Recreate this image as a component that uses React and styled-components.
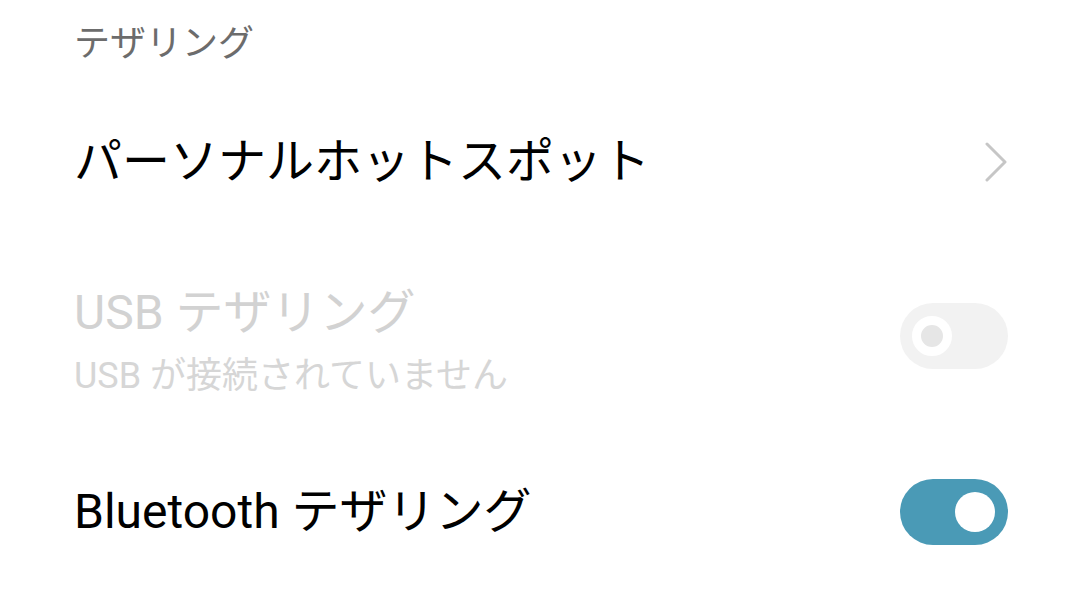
import React from "react";
import styled, { createGlobalStyle } from "styled-components";

const Global = createGlobalStyle`
  html, body { margin: 0; padding: 0; background: #ffffff; }
  body { font-family: Roboto, "Noto Sans CJK JP", sans-serif; }
`;

const Page = styled.div`
  width: 1080px;
  height: 591px;
  overflow: hidden;
  background: #ffffff;
  display: flex;
  flex-direction: column;
  padding: 0 72px 0 74px;
  box-sizing: border-box;
`;

const SectionTitle = styled.div`
  font-size: 36px;
  line-height: 50px;
  color: #6c6c6c;
  padding-top: 19px;
  height: 72px;
  box-sizing: border-box;
  flex: none;
`;

const Row = styled.div`
  display: flex;
  align-items: center;
  justify-content: space-between;
  height: ${(p) => p.$h}px;
  flex: none;
`;

const TextBlock = styled.div`
  display: flex;
  flex-direction: column;
  gap: ${(p) => (p.$sub ? 12 : 0)}px;
  margin-top: ${(p) => p.$offset || 0}px;
`;

const Title = styled.div`
  font-size: 48px;
  line-height: 56px;
  color: ${(p) => (p.$disabled ? "#d2d2d2" : "#000000")};
  white-space: nowrap;
`;

const Subtitle = styled.div`
  font-size: 36px;
  line-height: 46px;
  color: #d6d6d6;
  white-space: nowrap;
`;

const Chevron = styled.svg`
  width: 24px;
  height: 40px;
  flex: none;
`;

const Track = styled.div`
  width: 108px;
  height: 66px;
  border-radius: 33px;
  background: ${(p) => (p.$on ? "#4a9ab6" : "#f2f2f2")};
  display: flex;
  align-items: center;
  justify-content: ${(p) => (p.$on ? "flex-end" : "flex-start")};
  padding: 0 13px 0 12px;
  box-sizing: border-box;
  flex: none;
`;

const Knob = styled.div`
  width: ${(p) => (p.$on ? 40 : 22)}px;
  height: ${(p) => (p.$on ? 40 : 22)}px;
  border-radius: 50%;
  background: ${(p) => (p.$on ? "#ffffff" : "#e6e6e6")};
  border: ${(p) => (p.$on ? "none" : "9px solid #ffffff")};
`;

export default function App() {
  return (
    <>
      <Global />
      <Page>
        <SectionTitle>テザリング</SectionTitle>
        <Row $h={180}>
          <TextBlock>
            <Title>パーソナルホットスポット</Title>
          </TextBlock>
          <Chevron viewBox="0 0 24 40">
            <path
              d="M3 2 L21 20 L3 38"
              fill="none"
              stroke="#c6c6c6"
              strokeWidth="3"
              strokeLinecap="round"
              strokeLinejoin="round"
            />
          </Chevron>
        </Row>
        <Row $h={168}>
          <TextBlock $sub $offset={12}>
            <Title $disabled>USB テザリング</Title>
            <Subtitle>USB が接続されていません</Subtitle>
          </TextBlock>
          <Track>
            <Knob />
          </Track>
        </Row>
        <Row $h={184}>
          <TextBlock>
            <Title>Bluetooth テザリング</Title>
          </TextBlock>
          <Track $on>
            <Knob $on />
          </Track>
        </Row>
      </Page>
    </>
  );
}
